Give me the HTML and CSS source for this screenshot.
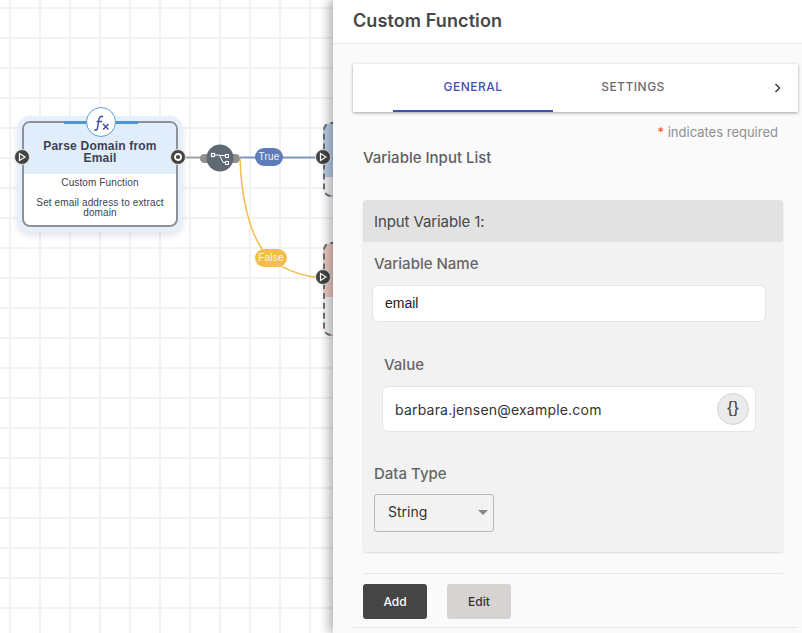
FILE: index.html
```html
<!DOCTYPE html>
<html lang="en">
<head>
    <meta charset="UTF-8">
    <meta name="viewport" content="width=device-width, initial-scale=1.0">
    <title>Custom Function</title>
    <link rel="stylesheet" href="styles.css">
</head>
<body>
    <div class="canvas">
        <!-- Wires between the nodes -->
        <svg class="wires" width="340" height="633" viewBox="0 0 340 633">
            <path d="M184 157.500H210" stroke="#a3a3a3" stroke-width="2" fill="none"/>
            <path d="M240 157.500H320" stroke="#7f96c4" stroke-width="2" fill="none"/>
            <path d="M240 158C241 198 250 232 262 249C270 262 290 274 318 277.500" stroke="#f4bd4a" stroke-width="1.500" fill="none"/>
            <rect x="200" y="154" width="14" height="9" rx="4.500" fill="#8f8f8f"/>
            <rect x="226" y="154" width="14" height="9" rx="4.500" fill="#8f8f8f"/>
            <circle cx="220" cy="158" r="13.500" fill="#5f6973"/>
            <g stroke="#fff" fill="none" stroke-width="1">
                <rect x="211.500" y="153.500" width="3" height="3" stroke-width="1.200"/>
                <rect x="225.500" y="154.500" width="3" height="3"/>
                <rect x="225.500" y="161.500" width="3" height="3"/>
                <path d="M215 155H219.500L223 162.500H225.500M219.500 155.500H225.500"/>
            </g>
        </svg>

        <div class="pill pill-true">True</div>
        <div class="pill pill-false">False</div>

        <div class="ghost ghost-blue"></div>
        <div class="ghost ghost-red"></div>

        <div class="node">
            <div class="node-icon">
                <svg width="26" height="22" viewBox="0 0 26 22" fill="none" stroke="#3f4c9e" stroke-width="1.400">
                    <path d="M15 6C13.500 4.500 11.500 5.500 11 8L9.500 17C9 19.500 7.500 19.800 6.500 18.500"/>
                    <path d="M8.500 10.500H14"/>
                    <path d="M15 13L20.500 18.500M20.500 13L15 18.500"/>
                </svg>
            </div>
            <div class="node-head">Parse Domain from Email</div>
            <div class="node-body">
                <p>Custom Function</p>
                <p>Set email address to extract domain</p>
            </div>
            <span class="port port-left">
                <svg width="10" height="10" viewBox="0 0 10 10" fill="none" stroke="#fff" stroke-width="1.200"><path d="M2.500 1.500L8 5L2.500 8.500Z"/></svg>
            </span>
            <span class="port port-right">
                <svg width="10" height="10" viewBox="0 0 10 10" fill="none" stroke="#fff" stroke-width="1.800"><circle cx="5" cy="5" r="3"/></svg>
            </span>
        </div>

        <span class="port port-true">
            <svg width="10" height="10" viewBox="0 0 10 10" fill="none" stroke="#fff" stroke-width="1.200"><path d="M2.500 1.500L8 5L2.500 8.500Z"/></svg>
        </span>
        <span class="port port-false">
            <svg width="10" height="10" viewBox="0 0 10 10" fill="none" stroke="#fff" stroke-width="1.200"><path d="M2.500 1.500L8 5L2.500 8.500Z"/></svg>
        </span>
    </div>

    <div class="panel">
        <h1 class="panel-title">Custom Function</h1>
        <div class="panel-body">
            <div class="tabs">
                <div class="tab tab-active">GENERAL</div>
                <div class="tab">SETTINGS</div>
                <svg class="tab-next" width="10" height="12" viewBox="0 0 10 12" fill="none" stroke="#3c3c3c" stroke-width="1.500">
                    <path d="M2.500 2L6.500 6L2.500 10"/>
                </svg>
            </div>
            <div class="required"><span class="star">*</span> indicates required</div>
            <h2 class="section-title">Variable Input List</h2>

            <div class="card">
                <div class="card-head">Input Variable 1:</div>
                <div class="card-body">
                    <label class="field-label">Variable Name</label>
                    <div class="input input-name">email</div>
                    <label class="field-label label-value">Value</label>
                    <div class="input input-value">
                        <span>barbara.jensen@example.com</span>
                        <span class="braces">{}</span>
                    </div>
                    <label class="field-label label-type">Data Type</label>
                    <div class="select">String<i class="caret"></i></div>
                </div>
            </div>

            <div class="actions">
                <button class="btn btn-dark">Add</button>
                <button class="btn btn-light">Edit</button>
            </div>
        </div>
    </div>
</body>
</html>
```

FILE: styles.css
```css
* {
    box-sizing: border-box;
}
html, body {
    height: 100%;
}
body {
    margin: 0;
    overflow: hidden;
    display: flex;
    font-family: Inter, "Liberation Sans", sans-serif;
    background-color: #fff;
}

/* Canvas with the workflow */
.canvas {
    position: relative;
    width: 333px;
    flex-shrink: 0;
    background-color: #fff;
    background-image:
        linear-gradient(to right, #f2f2f2 2px, transparent 2px),
        linear-gradient(to bottom, #f2f2f2 2px, transparent 2px);
    background-size: 30px 30px;
    background-position: 9px 7px;
}
.wires {
    position: absolute;
    left: 0;
    top: 0;
}
.pill {
    position: absolute;
    left: 255px;
    height: 18px;
    border-radius: 9px;
    color: #f3f3f3;
    font-family: "Liberation Sans", sans-serif;
    font-size: 10px;
    letter-spacing: 0.2px;
    line-height: 18px;
    text-align: center;
}
.pill-true {
    top: 148px;
    width: 28px;
    background-color: #5f7cba;
}
.pill-false {
    top: 249px;
    width: 32px;
    background-color: #f4bd4a;
}
.node {
    position: absolute;
    left: 22px;
    top: 121px;
    width: 156px;
    height: 106px;
    background-color: #fff;
    border: 2px solid #8e9196;
    border-radius: 8px;
    box-shadow: 0 0 0 5px #e6effc, 0 4px 6px 5px rgba(120, 130, 150, 0.2);
    color: #3c4252;
    font-family: "Liberation Sans", sans-serif;
    text-align: center;
}
.node::before {
    content: "";
    position: absolute;
    left: 40px;
    top: -2px;
    width: 74px;
    height: 3px;
    background-color: #4f94d4;
}
.node-icon {
    position: absolute;
    left: 62px;
    top: -16px;
    width: 30px;
    height: 30px;
    display: flex;
    align-items: center;
    justify-content: center;
    background-color: #fff;
    border: 1px solid #5b9dd9;
    border-radius: 50%;
}
.node-head {
    height: 51px;
    padding: 17px 12px 0;
    background-color: #e2edfc;
    border-radius: 6px 6px 0 0;
    font-size: 12px;
    font-weight: bold;
    letter-spacing: 0.2px;
    line-height: 12px;
}
.node-body {
    padding-top: 4px;
    font-size: 10px;
    letter-spacing: 0.12px;
    line-height: 10px;
}
.node-body p {
    margin: 0 6px 10px;
}
.port {
    position: absolute;
    width: 16px;
    height: 16px;
    display: flex;
    align-items: center;
    justify-content: center;
    background-color: #444;
    border: 1.500px solid #e4e4e4;
    border-radius: 50%;
}
.port-left {
    left: -10px;
    top: 26px;
}
.port-right {
    right: -10px;
    top: 26px;
}
.port-true {
    left: 315px;
    top: 149px;
}
.port-false {
    left: 315px;
    top: 269px;
}
.ghost {
    position: absolute;
    left: 323px;
    width: 30px;
    border: 2px dashed #6d7078;
    border-radius: 8px;
}
.ghost-blue {
    top: 122px;
    height: 75px;
    background: linear-gradient(to bottom, #b9cde9 53px, #f4f4f4 53px);
}
.ghost-red {
    top: 242px;
    height: 94px;
    background: linear-gradient(to bottom, #ecc9c2 53px, #f4f4f4 53px);
}

/* Side panel */
.panel {
    position: relative;
    z-index: 1;
    flex: 1;
    min-width: 0;
    display: flex;
    flex-direction: column;
    background-color: #fafafa;
    box-shadow: -4px 0 10px rgba(0, 0, 0, 0.3);
}
.panel-title {
    margin: 0;
    height: 44px;
    padding: 10px 20px 0;
    background-color: #fff;
    border-bottom: 1px solid #e8e8e8;
    color: #474747;
    font-size: 18px;
    font-weight: 600;
    letter-spacing: 0.1px;
    line-height: 22px;
}
.panel-body {
    padding: 20px 3px 0 20px;
}
.tabs {
    display: flex;
    align-items: center;
    width: 445px;
    height: 48px;
    padding-left: 40px;
    background-color: #fff;
    box-shadow: 0 1px 3px rgba(0, 0, 0, 0.35);
}
.tab {
    width: 160px;
    height: 48px;
    padding-top: 15px;
    color: #6b6b6b;
    font-size: 12px;
    font-weight: 500;
    letter-spacing: 0.5px;
    line-height: 16px;
    text-align: center;
}
.tab-active {
    color: #3f51b5;
    border-bottom: 2px solid #3f51b5;
}
.tab-next {
    margin-left: auto;
    margin-right: 15px;
}
.required {
    margin-top: 12px;
    padding-right: 21px;
    color: #909090;
    font-size: 13px;
    line-height: 16px;
    text-align: right;
}
.star {
    color: #f4511e;
}
.section-title {
    margin: 8px 0 0 10px;
    color: #5f5f5f;
    font-size: 15px;
    font-weight: 500;
    line-height: 20px;
}
.card {
    width: 420px;
    margin: 32px 0 0 10px;
    background-color: #f2f2f2;
    border-radius: 4px;
    box-shadow: 0 1px 2px rgba(0, 0, 0, 0.12);
}
.card-head {
    height: 42px;
    padding: 12px 11px 0;
    background-color: #e2e2e2;
    border-radius: 4px 4px 0 0;
    color: #474747;
    font-size: 15px;
    letter-spacing: -0.1px;
    line-height: 20px;
}
.card-body {
    height: 310px;
    padding: 12px 11px 0;
}
.field-label {
    display: block;
    color: #666;
    font-size: 15px;
    font-weight: 500;
    line-height: 20px;
}
.input {
    display: flex;
    align-items: center;
    justify-content: space-between;
    background-color: #fff;
    border: 1px solid #e4e4ea;
    border-radius: 6px;
    color: #333;
    font-size: 14px;
}
.input-name {
    width: 394px;
    height: 37px;
    margin: 11px 0 0 -2px;
    padding: 0 0 2px 12px;
    color: #222;
    font-family: "Liberation Sans", sans-serif;
    font-size: 14px;
}
.label-value {
    margin: 33px 0 0 10px;
}
.input-value {
    width: 374px;
    height: 46px;
    margin: 11px 0 0 8px;
    padding: 0 6px 0 12px;
    letter-spacing: 0.2px;
}
.braces {
    width: 32px;
    height: 32px;
    background-color: #ebebeb;
    border: 1px solid #d6d2d2;
    border-radius: 50%;
    color: #444;
    font-family: "Liberation Sans", sans-serif;
    font-size: 17px;
    letter-spacing: 0;
    line-height: 27px;
    text-align: center;
}
.label-type {
    margin-top: 32px;
}
.select {
    position: relative;
    width: 120px;
    height: 38px;
    margin-top: 10px;
    padding-left: 13px;
    border: 1px solid #b8b8b8;
    border-radius: 3px;
    color: #333;
    font-size: 14px;
    line-height: 33px;
}
.caret {
    position: absolute;
    right: 5px;
    top: 15px;
    border-left: 5px solid transparent;
    border-right: 5px solid transparent;
    border-top: 5px solid #888;
}
.actions {
    display: flex;
    gap: 20px;
    width: 445px;
    height: 55px;
    margin-top: 21px;
    padding: 11px 0 0 10px;
    border-bottom: 1px solid #e8e8e8;
    background: linear-gradient(#e8e8e8, #e8e8e8) 10px 0 / 420px 1px no-repeat;
}
.btn {
    width: 64px;
    height: 35px;
    border: none;
    border-radius: 3px;
    font-family: inherit;
    font-size: 12px;
    font-weight: 500;
}
.btn-dark {
    background-color: #454545;
    color: #fff;
}
.btn-light {
    background-color: #d8d3d3;
    color: #333;
}
```
